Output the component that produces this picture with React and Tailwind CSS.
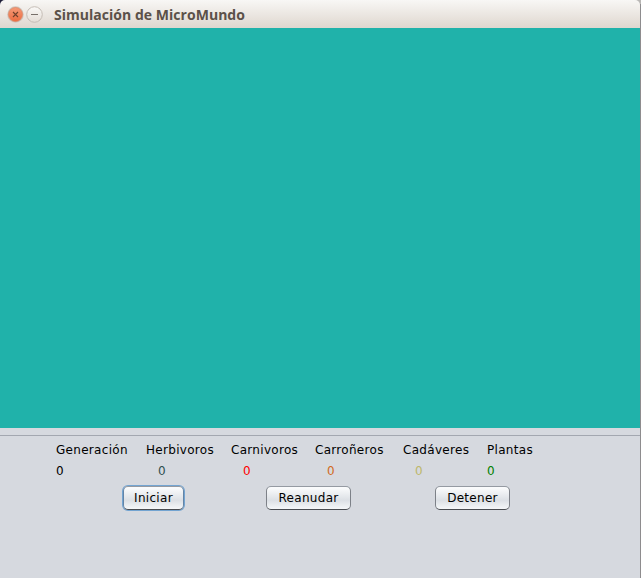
const stats = [
  { label: "Generación", column: "w-[90px]", value: "text-black" },
  { label: "Herbivoros", column: "w-[85px]", value: "pl-[12px] text-[#2f4f4f]" },
  { label: "Carnivoros", column: "w-[84px]", value: "pl-[12px] text-[#ff0000]" },
  { label: "Carroñeros", column: "w-[88px]", value: "pl-[12px] text-[#d2691e]" },
  { label: "Cadáveres", column: "w-[84px]", value: "pl-[12px] text-[#bdb76b]" },
  { label: "Plantas", column: "w-[60px]", value: "text-[#008000]" },
];

function TitleBar() {
  return (
    <header className="flex h-7 shrink-0 items-center rounded-t-[5px] bg-linear-to-b from-[#f8f7f5] to-[#dfd7cf] pl-[7px]">
      <svg width="37" height="18" viewBox="0 0 37 18" className="mt-px shrink-0">
        <defs>
          <linearGradient id="close" x2="0" y2="1">
            <stop stopColor="#f59a78" />
            <stop offset="1" stopColor="#ec6b3f" />
          </linearGradient>
          <linearGradient id="minimize" x2="0" y2="1">
            <stop stopColor="#faf9f7" />
            <stop offset="1" stopColor="#e4ddd6" />
          </linearGradient>
        </defs>
        <circle cx="8.5" cy="8.5" r="8.3" fill="#cfc5be" />
        <circle cx="8.5" cy="8.5" r="7" fill="url(#close)" stroke="#e08562" strokeWidth=".7" />
        <path d="M6 6l5 5M11 6l-5 5" stroke="#70402c" strokeWidth="1.1" />
        <circle cx="27.5" cy="8.5" r="7.8" fill="url(#minimize)" stroke="#c5bdb6" />
        <path d="M24 8.5h7" stroke="#77706a" />
      </svg>
      <h1 className="ml-[10px] mt-px whitespace-nowrap font-['Open_Sans','Noto_Sans',sans-serif] text-[14px] leading-5 font-bold tracking-[0.03px] text-[#5b5149]">
        Simulación de MicroMundo
      </h1>
    </header>
  );
}

function Button({ children, className }) {
  return (
    <button
      className={`h-6 rounded-[5px] border border-[#7d8188] border-t-[#959aa2] border-b-[#494c51] bg-linear-to-b from-[#fafbfc] from-5% via-[#dce0e5] via-60% to-[#f5f7f9] text-center leading-[20px] whitespace-nowrap ${className}`}
    >
      {children}
    </button>
  );
}

export default function App() {
  return (
    <div className="flex h-[578px] w-[641px] bg-[#b9b7b5]">
      <div className="flex w-[640px] flex-col bg-linear-to-r from-[#1d1d38] from-50% to-[#b9b7b5] to-50%">
        <TitleBar />
        <main className="flex flex-1 flex-col bg-[#d6d9df] font-['DejaVu_Sans',sans-serif] text-[12px] tracking-[0.3px] text-black">
          <section className="h-[400px] bg-[#20b2aa]" />
          <div className="mt-[7px] h-px bg-[#a3a7b0]" />
          <section className="mt-[6px] flex pl-[56px]">
            {stats.map((stat) => (
              <div key={stat.label} className={`shrink-0 whitespace-nowrap ${stat.column}`}>
                <div className="h-[21px] leading-4">{stat.label}</div>
                <div className={`h-4 leading-4 ${stat.value}`}>0</div>
              </div>
            ))}
          </section>
          <section className="mt-[7px] flex pl-[123px]">
            <Button className="w-[61px] border-[#6384a6] border-t-[#7fa3c8] shadow-[0_0_0_1px_#73a4d1]">Iniciar</Button>
            <Button className="ml-[82px] w-[85px]">Reanudar</Button>
            <Button className="ml-[84px] w-[75px]">Detener</Button>
          </section>
        </main>
      </div>
      <div className="mt-1 w-px bg-[#8e8c8e]" />
    </div>
  );
}
